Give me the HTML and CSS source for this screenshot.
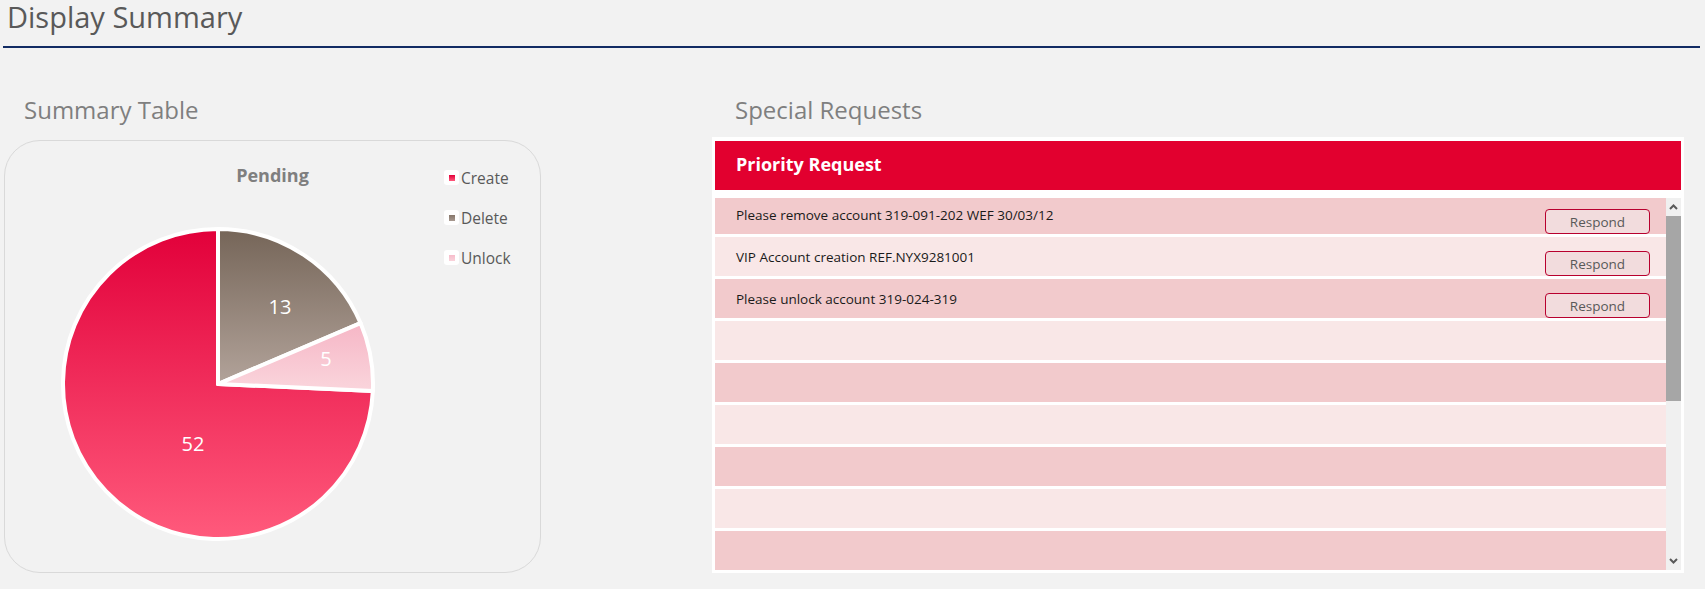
FILE: index.html
```html
<!DOCTYPE html>
<html lang="en">
<head>
<meta charset="utf-8">
<title>Display Summary</title>
<link rel="stylesheet" href="styles.css">
</head>
<body>
<header class="page-header">
  <h1 class="page-title">Display Summary</h1>
  <div class="page-rule"></div>
</header>
<main class="main">
  <section class="col-left">
    <h2 class="section-title">Summary Table</h2>
    <div class="chart-card">
      <div class="chart-title">Pending</div>
      <ul class="legend">
        <li class="legend-item"><span class="swatch"><span class="swatch-dot dot-create"></span></span>Create</li>
        <li class="legend-item"><span class="swatch"><span class="swatch-dot dot-delete"></span></span>Delete</li>
        <li class="legend-item"><span class="swatch"><span class="swatch-dot dot-unlock"></span></span>Unlock</li>
      </ul>
      <div class="pie-wrap">
        <svg class="pie" width="322" height="322" viewBox="0 0 322 322">
          <defs>
            <linearGradient id="gCreate" x1="0" y1="0" x2="0" y2="1">
              <stop offset="0" stop-color="#e2003a"/>
              <stop offset="1" stop-color="#ff5a7c"/>
            </linearGradient>
            <linearGradient id="gDelete" x1="0" y1="0" x2="0" y2="1">
              <stop offset="0" stop-color="#756558"/>
              <stop offset="1" stop-color="#b2a39a"/>
            </linearGradient>
            <linearGradient id="gUnlock" x1="0" y1="0" x2="0" y2="1">
              <stop offset="0" stop-color="#f6b6c6"/>
              <stop offset="1" stop-color="#fad5dc"/>
            </linearGradient>
          </defs>
          <g stroke="#ffffff" stroke-width="4" stroke-linejoin="round">
            <path d="M161,161 L315.84,167.95 A155,155 0 1 1 161,6 Z" fill="url(#gCreate)"/>
            <path d="M161,161 L161,6 A155,155 0 0 1 303.54,100.08 Z" fill="url(#gDelete)"/>
            <path d="M161,161 L303.54,100.08 A155,155 0 0 1 315.84,167.95 Z" fill="url(#gUnlock)"/>
          </g>
          <g class="pie-labels" fill="#ffffff" text-anchor="middle" dominant-baseline="central">
            <text x="223" y="83">13</text>
            <text x="269" y="135">5</text>
            <text x="136" y="220">52</text>
          </g>
        </svg>
      </div>
    </div>
  </section>
  <section class="col-right">
    <h2 class="section-title">Special Requests</h2>
    <div class="req-panel">
      <div class="req-header">Priority Request</div>
      <div class="req-body">
        <div class="req-rows">
          <div class="req-rows-inner">
            <div class="req-row row-dark"><span class="req-text">Please remove account 319-091-202 WEF 30/03/12</span><button class="respond">Respond</button></div>
            <div class="req-row row-light"><span class="req-text">VIP Account creation REF.NYX9281001</span><button class="respond">Respond</button></div>
            <div class="req-row row-dark"><span class="req-text">Please unlock account 319-024-319</span><button class="respond">Respond</button></div>
            <div class="req-row row-light"></div>
            <div class="req-row row-dark"></div>
            <div class="req-row row-light"></div>
            <div class="req-row row-dark"></div>
            <div class="req-row row-light"></div>
            <div class="req-row row-dark"></div>
          </div>
        </div>
        <div class="scrollbar">
          <div class="sb-btn">
            <svg width="9" height="6" viewBox="0 0 9 6"><polyline points="1,5 4.5,1.5 8,5" fill="none" stroke="#5a5a5a" stroke-width="2"/></svg>
          </div>
          <div class="sb-thumb"></div>
          <div class="sb-track"></div>
          <div class="sb-btn">
            <svg width="9" height="6" viewBox="0 0 9 6"><polyline points="1,1 4.5,4.5 8,1" fill="none" stroke="#5a5a5a" stroke-width="2"/></svg>
          </div>
        </div>
      </div>
    </div>
  </section>
</main>
</body>
</html>
```
FILE: styles.css
```css
* { box-sizing: border-box; }

html, body {
  margin: 0;
  padding: 0;
  background: #f2f2f2;
  font-family: "Open Sans", "Noto Sans", sans-serif;
}

.page-header {
  padding: 0 5px 0 3px;
}

.page-title {
  margin: 0;
  padding-left: 4px;
  font-size: 29px;
  line-height: 34px;
  font-weight: 400;
  color: #595959;
}

.page-rule {
  margin-top: 12px;
  height: 2px;
  background: #122c64;
}

.main {
  display: flex;
  padding: 46px 0 0 4px;
}

.col-left {
  width: 537px;
  display: flex;
  flex-direction: column;
}

.col-right {
  width: 972px;
  margin-left: 171px;
  display: flex;
  flex-direction: column;
}

.section-title {
  margin: 0;
  font-size: 24px;
  line-height: 31px;
  font-weight: 400;
  color: #7f7f7f;
}

.col-left .section-title { padding-left: 20px; }
.col-right .section-title { padding-left: 23px; }

/* chart card */
.chart-card {
  margin-top: 15px;
  height: 433px;
  border: 1px solid #d9d9d9;
  border-radius: 36px;
  display: grid;
  grid-template-columns: 1fr 96px;
  grid-template-rows: auto 1fr;
}

.chart-title {
  grid-column: 1 / -1;
  grid-row: 1;
  margin-top: 22px;
  text-align: center;
  font-size: 18px;
  line-height: 24px;
  font-weight: 700;
  color: #7f7f7f;
}

.legend {
  grid-column: 2;
  grid-row: 1 / span 2;
  list-style: none;
  margin: 29px 0 0 0;
  padding: 0;
  display: flex;
  flex-direction: column;
  gap: 25px;
}

.legend-item {
  display: flex;
  align-items: center;
  gap: 2px;
  height: 15px;
  font-size: 15.5px;
  color: #595959;
}

.swatch {
  width: 15px;
  height: 15px;
  background: #ffffff;
  border-radius: 3px;
  display: flex;
  align-items: center;
  justify-content: center;
}

.swatch-dot { width: 6px; height: 6px; }
.dot-create { background: linear-gradient(#e2003a, #ff5a7c); }
.dot-delete { background: linear-gradient(#86766a, #a89990); }
.dot-unlock { background: linear-gradient(#f7bccb, #fad3db); }

.pie-wrap {
  grid-column: 1;
  grid-row: 2;
  padding: 36px 0 0 52px;
}

.pie { display: block; }

.pie-labels {
  font-family: "Open Sans", "Noto Sans", sans-serif;
  font-size: 20px;
}

/* requests panel */
.req-panel {
  margin-top: 12px;
  background: #ffffff;
  padding: 4px 3px 3px 3px;
}

.req-header {
  height: 49px;
  background: #e2002f;
  color: #ffffff;
  font-size: 18px;
  font-weight: 700;
  line-height: 46px;
  padding-left: 21px;
}

.req-body {
  margin-top: 8px;
  display: flex;
  height: 372px;
}

.req-rows {
  flex: 1;
  overflow: hidden;
}

.req-rows-inner {
  margin-top: -3px;
  display: flex;
  flex-direction: column;
  gap: 3px;
}

.req-row {
  height: 39px;
  display: flex;
  align-items: center;
  justify-content: space-between;
  padding: 0 16px 0 21px;
}

.row-dark { background: #f2cacc; }
.row-light { background: #f9e7e7; }

.req-text {
  font-size: 13.5px;
  color: #1a1a1a;
}

.respond {
  align-self: flex-end;
  width: 105px;
  height: 25px;
  border: 1px solid #b8002e;
  border-radius: 4px;
  background: #f2dcdd;
  color: #595959;
  font-family: "Open Sans", "Noto Sans", sans-serif;
  font-size: 13.5px;
  padding: 0;
  margin-bottom: 0;
}

.scrollbar {
  width: 15px;
  background: #f0f0f0;
  display: flex;
  flex-direction: column;
}

.sb-btn {
  height: 18px;
  display: flex;
  align-items: center;
  justify-content: center;
}

.sb-thumb {
  height: 185px;
  background: #a6a6a6;
}

.sb-track { flex: 1; }
```
